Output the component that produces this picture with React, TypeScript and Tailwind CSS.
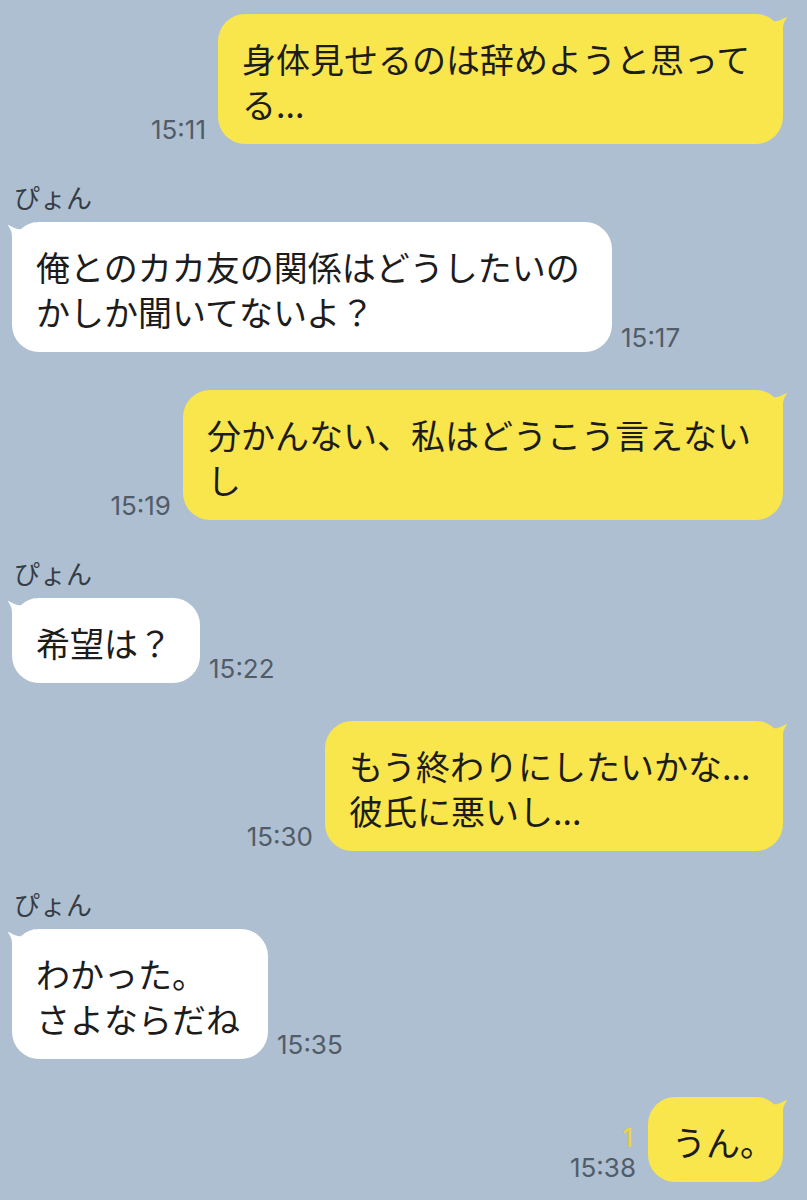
type Message = {
  side: "in" | "out";
  lines: string[];
  time: string;
  width: string;
  name?: string;
  read?: boolean;
};

const MESSAGES: Message[] = [
  {
    side: "out",
    lines: ["身体見せるのは辞めようと思って", "る..."],
    time: "15:11",
    width: "w-[565px]",
  },
  {
    side: "in",
    name: "ぴょん",
    lines: ["俺とのカカ友の関係はどうしたいの", "かしか聞いてないよ？"],
    time: "15:17",
    width: "w-[600px]",
  },
  {
    side: "out",
    lines: ["分かんない、私はどうこう言えない", "し"],
    time: "15:19",
    width: "w-[600px]",
  },
  {
    side: "in",
    name: "ぴょん",
    lines: ["希望は？"],
    time: "15:22",
    width: "w-[188px]",
  },
  {
    side: "out",
    lines: ["もう終わりにしたいかな...", "彼氏に悪いし..."],
    time: "15:30",
    width: "w-[458px]",
  },
  {
    side: "in",
    name: "ぴょん",
    lines: ["わかった。", "さよならだね"],
    time: "15:35",
    width: "w-[256px]",
  },
  {
    side: "out",
    lines: ["うん。"],
    time: "15:38",
    width: "w-[135px]",
    read: true,
  },
];

const JP = "font-['Noto_Sans_CJK_JP',sans-serif]";

function Tail({ color, flip }: { color: string; flip?: boolean }) {
  return (
    <svg
      width="28"
      height="30"
      viewBox="0 0 28 30"
      className={
        flip
          ? "absolute top-0 -left-[6px] -scale-x-100"
          : "absolute top-0 -right-[6px]"
      }
    >
      <path
        d="M0 0 C5 3 9 7.5 13 7.5 C17 7.5 22 5 26.5 2.5 C23.5 7 22 10 22 14 L22 30 L0 30 Z"
        fill={color}
      />
    </svg>
  );
}

function Bubble({ msg }: { msg: Message }) {
  const out = msg.side === "out";
  return (
    <div
      className={`relative ${msg.width} rounded-[27px] pl-6 pt-[22px] pb-[18px] ${
        out ? "bg-[#f9e54c]" : "bg-white"
      }`}
    >
      <Tail color={out ? "#f9e54c" : "#ffffff"} flip={!out} />
      <div
        className={`relative ${JP} text-[34px] leading-[45px] text-[#1c1c1c] whitespace-nowrap`}
      >
        {msg.lines.map((line, i) => (
          <div key={i}>{line}</div>
        ))}
      </div>
    </div>
  );
}

function Time({ value }: { value: string }) {
  return (
    <span className="font-['Inter',sans-serif] text-[26px] leading-[28px] text-[#525c68]">
      {value}
    </span>
  );
}

function Row({ msg }: { msg: Message }) {
  if (msg.side === "out") {
    return (
      <div className="flex justify-end items-end gap-[12px] pr-[24px]">
        <div className="flex flex-col items-end">
          {msg.read && (
            <span className="font-['Inter',sans-serif] text-[26px] leading-[28px] text-[#efd23a] mb-[2px] mr-[3px]">
              1
            </span>
          )}
          <Time value={msg.time} />
        </div>
        <Bubble msg={msg} />
      </div>
    );
  }
  return (
    <div className="flex flex-col">
      {msg.name && (
        <div className={`${JP} pl-[14px] text-[26px] leading-[30px] text-[#353d46] mb-[10px]`}>
          {msg.name}
        </div>
      )}
      <div className="flex items-end gap-[9px] pl-[12px]">
        <Bubble msg={msg} />
        <Time value={msg.time} />
      </div>
    </div>
  );
}

export default function App() {
  return (
    <div className="min-h-screen w-full bg-[#adbfd0] pt-[14px] pb-4 flex flex-col gap-[38px]">
      {MESSAGES.map((m, i) => (
        <Row key={i} msg={m} />
      ))}
    </div>
  );
}
